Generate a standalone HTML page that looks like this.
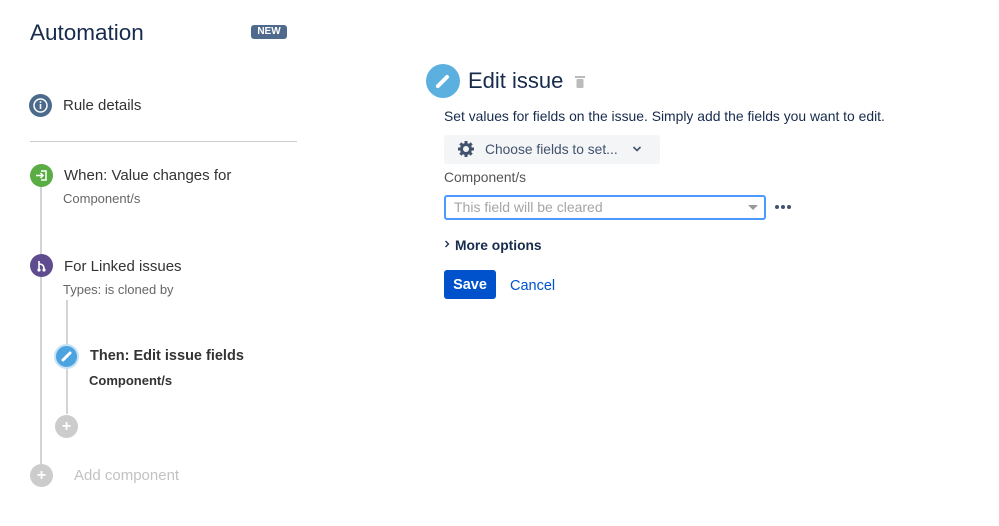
<!DOCTYPE html>
<html><head><meta charset="utf-8"><style>
*{margin:0;padding:0;box-sizing:border-box}
body{width:999px;height:526px;background:#fff;font-family:"Liberation Sans",Arial,sans-serif;position:relative;overflow:hidden;color:#172B4D}
.a{position:absolute;white-space:nowrap}
.c{position:absolute;border-radius:50%}
.vl{position:absolute;width:2px;background:#d4d4d4}
.d{position:absolute;width:4px;height:4px;border-radius:50%;background:#42526E}
</style></head><body>
<div class="a" style="left:30px;top:20px;font-size:22.5px;color:#172B4D">Automation</div>
<div class="a" style="left:251px;top:25px;width:36px;height:14px;background:#4F6A8C;border-radius:3px;color:#fff;font-size:10px;font-weight:bold;text-align:center;line-height:13px">NEW</div>

<div class="c" style="left:29px;top:94px;width:23px;height:23px;background:#4C6A8C"></div>
<svg class="a" style="left:29px;top:94px" width="23" height="23"><circle cx="11.5" cy="11.5" r="6.5" fill="none" stroke="#fff" stroke-width="1.5"/><rect x="10.7" y="10" width="1.6" height="5" fill="#fff"/><rect x="10.7" y="7.3" width="1.6" height="1.6" fill="#fff"/></svg>
<div class="a" style="left:63px;top:97px;font-size:15px;color:#333">Rule details</div>
<div class="a" style="left:30px;top:141px;width:267px;height:1px;background:#ccc"></div>

<div class="vl" style="left:40px;top:186px;height:278px"></div>
<div class="c" style="left:30px;top:164px;width:23px;height:23px;background:#5AAC44"></div>
<svg class="a" style="left:30px;top:164px" width="23" height="23"><path d="M11 7h5v9h-5" fill="none" stroke="#fff" stroke-width="1.5"/><path d="M6 11.5h7M10.5 9l2.5 2.5-2.5 2.5" fill="none" stroke="#fff" stroke-width="1.5"/></svg>
<div class="a" style="left:64px;top:167px;font-size:15px;color:#333">When: Value changes for</div>
<div class="a" style="left:63px;top:191px;font-size:13px;color:#666">Component/s</div>

<div class="c" style="left:30px;top:254px;width:23px;height:23px;background:#5E4C8F"></div>
<svg class="a" style="left:30px;top:254px" width="23" height="23"><path d="M9 7v9M9 10q5 0 5 5" fill="none" stroke="#fff" stroke-width="1.6"/><circle cx="9" cy="16" r="1.6" fill="#fff"/><circle cx="14" cy="16" r="1.6" fill="#fff"/></svg>
<div class="a" style="left:64px;top:258px;font-size:15px;color:#333">For Linked issues</div>
<div class="a" style="left:63px;top:282px;font-size:13px;color:#666">Types: is cloned by</div>

<div class="vl" style="left:66px;top:300px;height:114px"></div>
<div class="c" style="left:54px;top:344px;width:25px;height:25px;background:#4BA3E0;border:2px solid #c8e2f5"></div>
<svg class="a" style="left:55px;top:345px" width="23" height="23"><path d="M8 15l7-7" stroke="#fff" stroke-width="3" stroke-linecap="round"/></svg>
<div class="a" style="left:90px;top:348px;font-size:14.5px;font-weight:bold;color:#333">Then: Edit issue fields</div>
<div class="a" style="left:89px;top:373px;font-size:13px;font-weight:bold;color:#333">Component/s</div>

<div class="c" style="left:55px;top:415px;width:23px;height:23px;background:#ccc"></div>
<div class="a" style="left:55px;top:415px;width:23px;line-height:23px;text-align:center;color:#fff;font-size:16px;font-weight:bold">+</div>
<div class="c" style="left:30px;top:464px;width:23px;height:23px;background:#ccc"></div>
<div class="a" style="left:30px;top:464px;width:23px;line-height:23px;text-align:center;color:#fff;font-size:16px;font-weight:bold">+</div>
<div class="a" style="left:74px;top:467px;font-size:15px;color:#c2c2c2">Add component</div>

<div class="c" style="left:426px;top:64px;width:34px;height:34px;background:#5BB0E0"></div>
<svg class="a" style="left:426px;top:64px" width="34" height="34"><path d="M12 22l9-9" stroke="#fff" stroke-width="4" stroke-linecap="round"/><path d="M10.5 23.5l1-3" stroke="#fff" stroke-width="1.5"/></svg>
<div class="a" style="left:468px;top:68px;font-size:22px;color:#172B4D">Edit issue</div>
<svg class="a" style="left:574px;top:75px" width="12" height="14"><rect x="1" y="1" width="10" height="2" fill="#bbb"/><rect x="2.5" y="4" width="7" height="9" rx="1" fill="#bbb"/></svg>
<div class="a" style="left:444px;top:108px;font-size:13.9px;color:#172B4D">Set values for fields on the issue. Simply add the fields you want to edit.</div>
<div class="a" style="left:444px;top:135px;width:216px;height:29px;background:#F4F5F7;border-radius:3px"></div>
<svg class="a" style="left:457px;top:140px" width="18" height="18"><g fill="#42526E"><circle cx="9" cy="9" r="6"/><rect x="7.5" y="1" width="3" height="16"/><rect x="1" y="7.5" width="16" height="3"/><rect x="7.5" y="1" width="3" height="16" transform="rotate(45 9 9)"/><rect x="7.5" y="1" width="3" height="16" transform="rotate(-45 9 9)"/></g><circle cx="9" cy="9" r="3" fill="#F4F5F7"/></svg>
<div class="a" style="left:485px;top:142px;font-size:13.8px;color:#42526E">Choose fields to set...</div>
<svg class="a" style="left:632px;top:145px" width="10" height="8"><path d="M1.5 2l3.5 3.5L8.5 2" fill="none" stroke="#42526E" stroke-width="1.6"/></svg>
<div class="a" style="left:444px;top:170px;font-size:13.8px;color:#555">Component/s</div>
<div class="a" style="left:444px;top:195px;width:322px;height:25px;border:2px solid #4C9AFF;border-radius:3px"></div>
<div class="a" style="left:454px;top:199px;font-size:14px;color:#a5a5a5">This field will be cleared</div>
<svg class="a" style="left:747px;top:204px" width="12" height="7"><path d="M1 1h10L6 6z" fill="#999"/></svg>
<div class="d" style="left:775px;top:205px"></div><div class="d" style="left:781px;top:205px"></div><div class="d" style="left:787px;top:205px"></div>
<svg class="a" style="left:444px;top:240px" width="6" height="8"><path d="M1.5 1l3 3-3 3" fill="none" stroke="#172B4D" stroke-width="1.3"/></svg>
<div class="a" style="left:455px;top:238px;font-size:13.8px;font-weight:bold;color:#172B4D">More options</div>
<div class="a" style="left:444px;top:270px;width:52px;height:29px;background:#0052CC;border-radius:3px;color:#fff;font-size:14.5px;font-weight:bold;text-align:center;line-height:30px">Save</div>
<div class="a" style="left:510px;top:278px;font-size:14.5px;color:#0052CC">Cancel</div>
</body></html>
